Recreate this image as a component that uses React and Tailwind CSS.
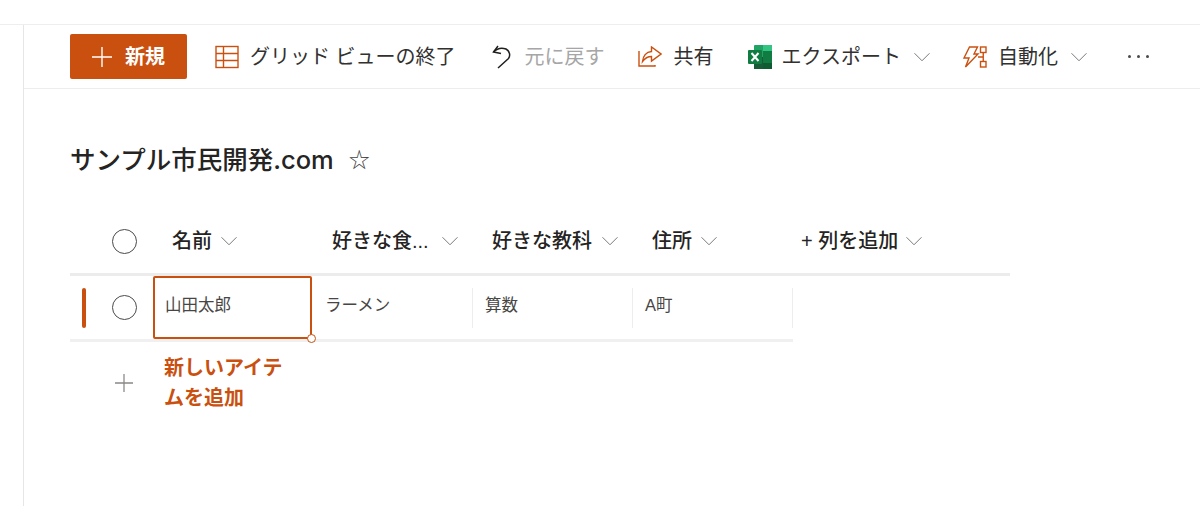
import React from 'react';

const ORANGE = '#ca5010';

// thin chevron used across the command bar and the column headers
const Chevron = ({ className = '' }) => (
  <svg viewBox="0 0 20 12" className={`w-[18px] h-[10px] text-[#605e5c] ${className}`} fill="none" stroke="currentColor" strokeWidth="1">
    <path d="M1 1.500 10 10.500l9-9" />
  </svg>
);

const Plus = ({ className = '', color = 'currentColor' }) => (
  <svg viewBox="0 0 20 20" className={className} fill="none" stroke={color} strokeWidth="1.400">
    <path d="M10 0v20M0 10h20" />
  </svg>
);

const Circle = () => (
  <span className="block w-[25px] h-[25px] rounded-full border-[1.500px] border-[#4a4a4a]" />
);

const GridIcon = () => (
  <svg viewBox="0 0 24 24" className="w-[24px] h-[24px]" fill="none" stroke={ORANGE} strokeWidth="1.400">
    <rect x="1" y="1.500" width="22" height="21" />
    <path d="M1 8.500h22M1 15.500h22M8.500 1.500v21" />
  </svg>
);

const UndoIcon = () => (
  <svg viewBox="0 0 20 24" className="w-[20px] h-[24px]" fill="none" stroke="#201f1e" strokeWidth="1.500">
    <path d="M6 1 1.500 7l7.500 1.500" />
    <path d="M1.500 7C5 3.500 10 2.500 14 4c4 2 4.500 7 2.500 9.500L6 23" />
  </svg>
);

const ShareIcon = () => (
  <svg viewBox="0 0 24 22" className="w-[24px] h-[22px]" fill="none" stroke={ORANGE} strokeWidth="1.400">
    <path d="M1 5v15h16v-1" />
    <path d="M13.500 1v4.500C8 6 5 10.500 4.500 15.500 7 12 10 10.500 13.500 10.500V15L23 8z" />
  </svg>
);

const ExcelIcon = () => (
  <svg viewBox="0 0 24 24" className="w-[24px] h-[24px]">
    <rect x="6" y="0" width="18" height="24" rx="1" fill="#21a366" />
    <rect x="15" y="0" width="9" height="6" fill="#33c481" />
    <rect x="15" y="6" width="9" height="12" fill="#107c41" />
    <rect x="6" y="12" width="9" height="12" fill="#185c37" />
    <rect x="15" y="18" width="9" height="6" fill="#0f5c33" />
    <rect x="0" y="5" width="14" height="14" rx="1" fill="#107c41" />
    <path d="M3.500 8 10.500 16M10.500 8 3.500 16" stroke="#fff" strokeWidth="2" />
  </svg>
);

const AutomateIcon = () => (
  <svg viewBox="0 0 24 22" className="w-[24px] h-[22px]" fill="none" stroke={ORANGE} strokeWidth="1.400">
    <path d="M6.500 1h8L11 8h4L2.500 21 6 12H1z" />
    <rect x="17.500" y="1" width="5.500" height="5.500" />
    <rect x="17.500" y="15.500" width="5.500" height="5.500" />
    <path d="M20.250 6.500v9M15 11h5.250" />
  </svg>
);

const ToolbarItem = ({ icon, label, className = '', textClass = 'text-[#323130]', gap = 'ml-[11px]', chevron }) => (
  <div className={`flex items-center ${className}`}>
    {icon}
    <span className={`${gap} text-[20px] whitespace-nowrap ${textClass}`}>{label}</span>
    {chevron && <Chevron className="ml-[12px]" />}
  </div>
);

const columns = [
  { label: '好きな食...', value: 'ラーメン', chevronGap: 'ml-[12px]', cell: 'w-[161px] pl-[13px]' },
  { label: '好きな教科', value: '算数', chevronGap: 'ml-[9px]', cell: 'w-[160px] pl-[12px]' },
  { label: '住所', value: 'A町', chevronGap: 'ml-[8px]', cell: 'w-[160px] pl-[12px]' },
];

export default function App() {
  return (
    <div className="w-[1200px] h-[506px] overflow-hidden bg-white flex flex-col font-['Liberation_Sans','Noto_Sans_CJK_JP',sans-serif] text-[#323130]">
      <div className="h-[24px] shrink-0" />
      <div className="flex flex-1 min-h-0 border-t border-[#eeeeee]">
        <aside className="w-[24px] shrink-0 border-r border-[#e6e6e6]" />

        <main className="flex-1 min-w-0 flex flex-col">
          {/* Command bar */}
          <div className="h-[64px] shrink-0 flex items-center pl-[46px] border-b border-[#ededed]">
            <button className="w-[117px] h-[45px] rounded-[2px] bg-[#ca5010] text-white flex items-center pl-[22px]">
              <Plus className="w-[20px] h-[20px]" color="#fff" />
              <span className="ml-[13px] text-[20px] font-bold leading-none">新規</span>
            </button>
            <ToolbarItem className="ml-[28px]" icon={<GridIcon />} label="グリッド ビューの終了" />
            <ToolbarItem className="ml-[36px]" gap="ml-[13px]" icon={<UndoIcon />} label="元に戻す" textClass="text-[#a6a6a6]" />
            <ToolbarItem className="ml-[33px]" gap="ml-[12px]" icon={<ShareIcon />} label="共有" />
            <ToolbarItem className="ml-[34px]" gap="ml-[10px]" icon={<ExcelIcon />} label="エクスポート" chevron />
            <ToolbarItem className="ml-[32px]" gap="ml-[11px]" icon={<AutomateIcon />} label="自動化" chevron />
            <span className="ml-[40px] flex gap-[6px]">
              <i className="block w-[3px] h-[3px] rounded-full bg-[#4a4a4a]" />
              <i className="block w-[3px] h-[3px] rounded-full bg-[#4a4a4a]" />
              <i className="block w-[3px] h-[3px] rounded-full bg-[#4a4a4a]" />
            </span>
          </div>

          <div className="pl-[46px] flex-1">
            {/* List title */}
            <div className="pt-[53px] flex items-center">
              <h1 className="font-['Inter','Noto_Sans_CJK_JP',sans-serif] text-[25.500px] font-medium leading-[35px] whitespace-nowrap text-[#252423]">サンプル市民開発.com</h1>
              <span className="ml-[15px] text-[21px] leading-none text-[#444]">☆</span>
            </div>

            {/* Header row */}
            <div className="mt-[31px] pt-[1px] w-[940px] h-[68px] border-b-[3px] border-[#ececec] flex items-center text-[20px] font-medium text-[#252423]">
              <div className="w-[83px] pl-[42px]">
                <Circle />
              </div>
              <div className="w-[159px] pl-[19px] flex items-center">
                名前<Chevron className="ml-[8px]" />
              </div>
              {columns.map((col) => (
                <div key={col.label} className="w-[160px] pl-[20px] flex items-center whitespace-nowrap">
                  {col.label}
                  <Chevron className={col.chevronGap} />
                </div>
              ))}
              <div className="pl-[9px] flex items-center whitespace-nowrap">
                + 列を追加<Chevron className="ml-[7px]" />
              </div>
            </div>

            {/* Data row */}
            <div className="w-[723px] h-[66px] border-b-[3px] border-[#f0f0f0] flex text-[16.500px] text-[#484644]">
              <div className="w-[83px] relative flex items-center pl-[42px]">
                <span className="absolute left-[12px] top-[12px] w-[4px] h-[40px] rounded-full bg-[#ca5010]" />
                <Circle />
              </div>
              <div className="w-[159px] h-[63px] relative border-2 border-[#ca5010] rounded-[2px] pl-[10px] pt-[15px] leading-[24px]">
                山田太郎
                <span className="absolute -right-[6px] -bottom-[6px] w-[9px] h-[9px] rounded-full bg-white border border-[#ca5010]" />
              </div>
              {columns.map((col) => (
                <div key={col.value} className={`${col.cell} h-[40px] mt-[12px] pt-[5px] leading-[24px] border-r border-[#ededed] whitespace-nowrap`}>
                  {col.value}
                </div>
              ))}
            </div>

            {/* New item row */}
            <div className="flex mt-[11px]">
              <div className="w-[94px] pl-[45px] pt-[21px]">
                <Plus className="w-[18px] h-[18px]" color="#8a8886" />
              </div>
              <div className="w-[125px] text-[20px] leading-[30px] font-semibold text-[#ca5010]">
                新しいアイテムを追加
              </div>
            </div>
          </div>
        </main>
      </div>
    </div>
  );
}
